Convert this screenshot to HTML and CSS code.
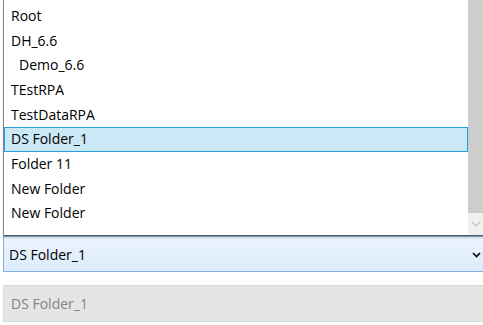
FILE: index.html
```html
<!DOCTYPE html>
<html>
<head>
<meta charset="utf-8">
<link rel="stylesheet" href="styles.css">
</head>
<body>
<div class="page">
  <div class="popup">
    <div class="list">
      <div class="row">Root</div>
      <div class="row">DH_6.6</div>
      <div class="row indent">Demo_6.6</div>
      <div class="row">TEstRPA</div>
      <div class="row">TestDataRPA</div>
      <div class="row selected">DS Folder_1</div>
      <div class="row">Folder 11</div>
      <div class="row">New Folder</div>
      <div class="row">New Folder</div>
    </div>
    <div class="scrollbar">
      <div class="thumb"></div>
      <div class="arrow">
        <svg width="10" height="6" viewBox="0 0 10 6"><path d="M0.5 0.5 L5 5 L9.5 0.5" fill="none" stroke="#a3a3a3" stroke-width="1"/></svg>
      </div>
    </div>
  </div>
  <div class="combo">
    <span class="value">DS Folder_1</span>
    <svg class="chev" width="9" height="6" viewBox="0 0 9 6"><path d="M1 1 L4.5 4.5 L8 1" fill="none" stroke="#000" stroke-width="1.6"/></svg>
  </div>
  <div class="disabled">DS Folder_1</div>
</div>
</body>
</html>
```
FILE: styles.css
```css
html, body {
  margin: 0;
  padding: 0;
  background: #ffffff;
}
body {
  font-family: "Open Sans", "Noto Sans", sans-serif;
  font-size: 14px;
  color: #000;
  width: 483px;
  height: 325px;
  overflow: hidden;
}
.page {
  display: flex;
  flex-direction: column;
  padding-left: 3px;
}
.popup {
  display: flex;
  height: 236px;
  box-sizing: border-box;
  border-left: 1px solid #828790;
  border-bottom: 1px solid #5a5a5a;
  background: #fff;
  position: relative;
  z-index: 2;
  box-shadow: 0 2px 2px rgba(0,0,0,0.15);
}
.list {
  flex: 1;
  padding-top: 4px;
  display: flex;
  flex-direction: column;
}
.row {
  height: 24.67px;
  box-sizing: border-box;
  padding-left: 7px;
  line-height: 24px;
  white-space: nowrap;
}
.row.indent {
  padding-left: 15px;
}
.row.selected {
  background: #cbe8f6;
  border: 1px solid #26a0da;
  padding-left: 6px;
  line-height: 22px;
}
.scrollbar {
  width: 15px;
  display: flex;
  flex-direction: column;
  background: #f0f0f0;
}
.thumb {
  height: 213px;
  background: #cdcdcd;
}
.arrow {
  flex: 1;
  display: flex;
  align-items: center;
  justify-content: center;
}
.combo {
  height: 36px;
  box-sizing: border-box;
  border: 1px solid #7eb4ea;
  border-right: none;
  background: linear-gradient(#ecf4fc, #dcecfc);
  display: flex;
  align-items: center;
  padding-left: 5px;
  padding-right: 2px;
}
.combo .value {
  flex: 1;
}
.chev {
  margin-top: 1px;
}
.disabled {
  margin-top: 13px;
  height: 37px;
  box-sizing: border-box;
  border: 1px solid #d9d9d9;
  border-right: none;
  background: #e5e5e5;
  color: #838383;
  display: flex;
  align-items: center;
  padding-left: 7px;
}
```
